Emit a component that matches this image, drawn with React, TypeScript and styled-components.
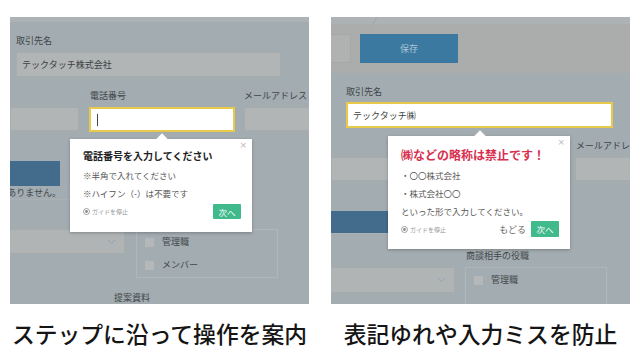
import * as React from 'react';
import styled, { createGlobalStyle } from 'styled-components';

const GlobalStyle = createGlobalStyle`
  html, body {
    margin: 0;
    padding: 0;
    background: #ffffff;
  }
  body {
    font-family: 'Noto Sans CJK JP', 'Noto Sans', sans-serif;
    color: #40464a;
  }
`;

const Page = styled.div`
  display: grid;
  grid-template-columns: 299px 299px;
  column-gap: 22px;
  padding: 17px 0 0 10px;
  width: 640px;
  height: 356px;
  box-sizing: border-box;
`;

const Panel = styled.div`
  position: relative;
  height: 287px;
  overflow: hidden;
  background: #a3acb0;
  display: flex;
  flex-direction: column;
`;

const Caption = styled.div`
  margin-top: 7px;
  text-align: center;
  font-size: 22.8px;
  line-height: 30px;
  font-weight: 500;
  color: #151515;
  white-space: nowrap;
`;

const TopStrip = styled.div<{ $h: number }>`
  height: ${({ $h }) => $h}px;
  flex-shrink: 0;
  background: #adb3b5;
  position: relative;
`;

const Header = styled.div`
  height: 49px;
  flex-shrink: 0;
  background: #abadad;
  display: flex;
  align-items: flex-start;
  padding-top: 10px;
  box-sizing: border-box;
  column-gap: 9px;
`;

const HeaderStub = styled.div`
  width: 20px;
  height: 29px;
  background: #b0b2b2;
  border: 1px solid #a6a8a8;
  border-left: none;
  box-sizing: border-box;
`;

const SaveButton = styled.div`
  width: 98px;
  height: 29px;
  background: #3b79a0;
  color: #a9c4d6;
  font-size: 9px;
  display: flex;
  align-items: center;
  justify-content: center;
`;

const Row = styled.div<{ $mt: number; $gap?: number }>`
  display: flex;
  align-items: flex-start;
  margin-top: ${({ $mt }) => $mt}px;
  column-gap: ${({ $gap }) => $gap ?? 0}px;
  flex-shrink: 0;
`;

const Label = styled.div<{ $ml?: number; $w?: number }>`
  font-size: 9px;
  line-height: 12px;
  color: #40464a;
  white-space: nowrap;
  margin-left: ${({ $ml }) => $ml ?? 0}px;
  width: ${({ $w }) => ($w ? `${$w}px` : 'auto')};
  flex-shrink: 0;
`;

const Input = styled.div<{ $w: number; $h: number; $ml?: number; $focus?: boolean }>`
  width: ${({ $w }) => $w}px;
  height: ${({ $h }) => $h}px;
  margin-left: ${({ $ml }) => $ml ?? 0}px;
  flex-shrink: 0;
  box-sizing: border-box;
  background: ${({ $focus }) => ($focus ? '#ffffff' : '#b2b5b5')};
  border: ${({ $focus }) => ($focus ? '2px solid #e8c94a' : '1px solid #a8acad')};
  display: flex;
  align-items: center;
  padding-left: 5px;
  font-size: 9px;
  color: #3a3f42;
  white-space: nowrap;
  overflow: hidden;
`;

const Caret = styled.span`
  width: 1px;
  height: 12px;
  background: #444;
  margin-left: 1px;
`;

const BlueBlock = styled.div<{ $w: number; $h: number }>`
  width: ${({ $w }) => $w}px;
  height: ${({ $h }) => $h}px;
  background: #436b8c;
`;

const EmptyNote = styled.div<{ $w: number; $h: number }>`
  width: ${({ $w }) => $w}px;
  height: ${({ $h }) => $h}px;
  box-sizing: border-box;
  border: 1px solid #a9b1b4;
  border-left: none;
  border-top: none;
  display: flex;
  align-items: center;
  justify-content: flex-end;
  padding-right: 8px;
  overflow: hidden;
  white-space: nowrap;
  font-size: 9px;
  color: #40464a;
`;

const Select = styled.div<{ $w: number; $h: number }>`
  width: ${({ $w }) => $w}px;
  height: ${({ $h }) => $h}px;
  flex-shrink: 0;
  box-sizing: border-box;
  background: #b0b4b4;
  border: 1px solid #a7abac;
  border-left: none;
  display: flex;
  align-items: center;
  justify-content: flex-end;
  padding-right: 8px;
`;

const CheckGroup = styled.div<{ $w: number; $h: number; $ml: number }>`
  width: ${({ $w }) => $w}px;
  height: ${({ $h }) => $h}px;
  margin-left: ${({ $ml }) => $ml}px;
  flex-shrink: 0;
  box-sizing: border-box;
  border: 1px solid #b0b7ba;
  padding: 7px 0 0 8px;
  display: flex;
  flex-direction: column;
  row-gap: 13px;
`;

const CheckItem = styled.div`
  display: flex;
  align-items: center;
  column-gap: 8px;
  font-size: 9px;
  line-height: 10px;
  color: #40464a;
`;

const Box = styled.span`
  width: 9px;
  height: 9px;
  background: #b4b8b9;
  display: inline-block;
`;

const Tooltip = styled.div<{ $left: number; $top: number; $h: number }>`
  position: absolute;
  left: ${({ $left }) => $left}px;
  top: ${({ $top }) => $top}px;
  width: 182px;
  height: ${({ $h }) => $h}px;
  background: #ffffff;
  box-shadow: 0 1px 3px rgba(0, 0, 0, 0.25);
  box-sizing: border-box;
  padding: 0 11px 0 13px;
  display: flex;
  flex-direction: column;
  z-index: 2;
`;

const Arrow = styled.div<{ $x: number }>`
  position: absolute;
  top: -4px;
  left: ${({ $x }) => $x - 4}px;
  width: 8px;
  height: 8px;
  background: #fff;
  transform: rotate(45deg);
`;

const Close = styled.div`
  position: absolute;
  right: 5px;
  top: 1px;
  font-size: 9px;
  line-height: 10px;
  color: #b8b8b8;
  font-family: 'DejaVu Sans', sans-serif;
`;

const TipTitle = styled.div<{ $red?: boolean }>`
  font-size: ${({ $red }) => ($red ? 12 : 10)}px;
  line-height: ${({ $red }) => ($red ? 16 : 14)}px;
  font-weight: 700;
  color: ${({ $red }) => ($red ? '#d8304f' : '#222')};
  margin-top: ${({ $red }) => ($red ? 11 : 10)}px;
  margin-bottom: 3px;
  white-space: nowrap;
`;

const TipLine = styled.div`
  font-size: 8.5px;
  line-height: 18px;
  color: #555;
  white-space: nowrap;
`;

const TipFooter = styled.div<{ $mt: number }>`
  display: flex;
  align-items: center;
  margin-top: ${({ $mt }) => $mt}px;
`;

const GuideStop = styled.div`
  display: flex;
  align-items: center;
  column-gap: 2px;
  font-size: 6px;
  color: #9a9a9a;
  white-space: nowrap;
  flex: 1;
`;

const BackLink = styled.div`
  font-size: 9px;
  color: #6a6a6a;
  margin-right: 5px;
`;

const NextButton = styled.div<{ $h: number }>`
  width: 28px;
  height: ${({ $h }) => $h}px;
  background: #40b98b;
  color: #fff;
  font-size: 8.5px;
  display: flex;
  align-items: center;
  justify-content: center;
  border-radius: 1px;
`;

const SlashLine = styled.div`
  position: absolute;
  left: 43px;
  top: 0;
  width: 1px;
  height: 8px;
  background: #9ea2a2;
  transform: skewX(-30deg);
`;

const Chevron = () => (
  <svg width="9" height="6" viewBox="0 0 9 6">
    <polyline points="1,1 4.5,4.5 8,1" fill="none" stroke="#8ea6ba" strokeWidth="1" />
  </svg>
);

const StopIcon = () => (
  <svg width="7" height="7" viewBox="0 0 7 7">
    <circle cx="3.5" cy="3.5" r="3" fill="none" stroke="#8a8a8a" strokeWidth="0.8" />
    <circle cx="3.5" cy="3.5" r="1.4" fill="#8a8a8a" />
  </svg>
);

function StepPanel() {
  return (
    <Panel>
      <TopStrip $h={5} />
      <Row $mt={13}>
        <Label $ml={6}>取引先名</Label>
      </Row>
      <Row $mt={5}>
        <Input $w={265} $h={25} $ml={6}>
          テックタッチ株式会社
        </Input>
      </Row>
      <Row $mt={13}>
        <Label $ml={80} $w={154}>
          電話番号
        </Label>
        <Label>メールアドレス</Label>
      </Row>
      <Row $mt={5}>
        <Input $w={69} $h={24} />
        <Input $w={146} $h={25} $ml={10} $focus>
          <Caret />
        </Input>
        <Input $w={70} $h={24} $ml={9} />
      </Row>
      <Row $mt={29}>
        <BlueBlock $w={50} $h={25} />
      </Row>
      <EmptyNote $w={60} $h={18}>
        登録データがありません。
      </EmptyNote>
      <Row $mt={29}>
        <Select $w={115} $h={25}>
          <Chevron />
        </Select>
        <CheckGroup $w={142} $h={49} $ml={11}>
          <CheckItem>
            <Box />
            管理職
          </CheckItem>
          <CheckItem>
            <Box />
            メンバー
          </CheckItem>
        </CheckGroup>
      </Row>
      <Row $mt={14}>
        <Label $ml={104}>提案資料</Label>
      </Row>

      <Tooltip $left={60} $top={122} $h={93}>
        <Arrow $x={92} />
        <Close>×</Close>
        <TipTitle>電話番号を入力してください</TipTitle>
        <TipLine>※半角で入れてください</TipLine>
        <TipLine>※ハイフン（-）は不要です</TipLine>
        <TipFooter $mt={2}>
          <GuideStop>
            <StopIcon />
            ガイドを停止
          </GuideStop>
          <NextButton $h={15}>次へ</NextButton>
        </TipFooter>
      </Tooltip>
    </Panel>
  );
}

function ValidationPanel() {
  return (
    <Panel>
      <TopStrip $h={7}>
        <SlashLine />
      </TopStrip>
      <Header>
        <HeaderStub />
        <SaveButton>保存</SaveButton>
      </Header>
      <Row $mt={13}>
        <Label $ml={15}>取引先名</Label>
      </Row>
      <Row $mt={4}>
        <Input $w={267} $h={26} $ml={15} $focus>
          テックタッチ㈱
        </Input>
      </Row>
      <Row $mt={12}>
        <Label $ml={245}>メールアドレス</Label>
      </Row>
      <Row $mt={5}>
        <Input $w={130} $h={24} />
        <Input $w={60} $h={24} $ml={114} />
      </Row>
      <Row $mt={30}>
        <BlueBlock $w={57} $h={22} />
      </Row>
      <EmptyNote $w={57} $h={17}>
        登録データがありません。
      </EmptyNote>
      <Row $mt={16}>
        <Label $ml={135}>商談相手の役職</Label>
      </Row>
      <Row $mt={5}>
        <Select $w={124} $h={26}>
          <Chevron />
        </Select>
        <CheckGroup $w={142} $h={49} $ml={10}>
          <CheckItem>
            <Box />
            管理職
          </CheckItem>
        </CheckGroup>
      </Row>

      <Tooltip $left={57} $top={119} $h={113}>
        <Arrow $x={92} />
        <Close>×</Close>
        <TipTitle $red>㈱などの略称は禁止です！</TipTitle>
        <TipLine>・〇〇株式会社</TipLine>
        <TipLine>・株式会社〇〇</TipLine>
        <TipLine>といった形で入力してください。</TipLine>
        <TipFooter $mt={1}>
          <GuideStop>
            <StopIcon />
            ガイドを停止
          </GuideStop>
          <BackLink>もどる</BackLink>
          <NextButton $h={16}>次へ</NextButton>
        </TipFooter>
      </Tooltip>
    </Panel>
  );
}

export default function App() {
  return (
    <React.Fragment>
      <GlobalStyle />
      <Page>
        <StepPanel />
        <ValidationPanel />
        <Caption>ステップに沿って操作を案内</Caption>
        <Caption>表記ゆれや入力ミスを防止</Caption>
      </Page>
    </React.Fragment>
  );
}
